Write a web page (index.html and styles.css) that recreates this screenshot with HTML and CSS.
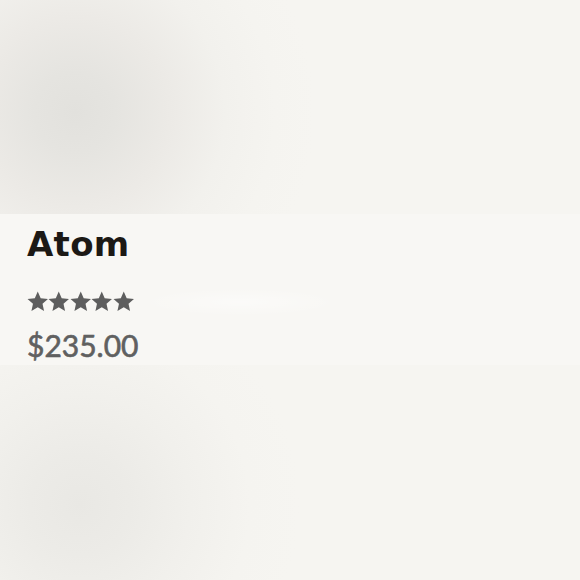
FILE: index.html
```html
<!DOCTYPE html>
<html>
<head>
<meta charset="utf-8">
<link rel="stylesheet" href="styles.css">
</head>
<body>
<div class="page">
  <div class="media media-top"></div>
  <div class="card">
    <h2 class="title">Atom</h2>
    <div class="stars" aria-label="5 stars">
      <svg class="star" viewBox="0 0 24 24"><polygon points="12,0.6 15.29,8.07 23.41,8.89 17.33,14.33 19.05,22.31 12,18.2 4.95,22.31 6.67,14.33 0.59,8.89 8.71,8.07"/></svg>
      <svg class="star" viewBox="0 0 24 24"><polygon points="12,0.6 15.29,8.07 23.41,8.89 17.33,14.33 19.05,22.31 12,18.2 4.95,22.31 6.67,14.33 0.59,8.89 8.71,8.07"/></svg>
      <svg class="star" viewBox="0 0 24 24"><polygon points="12,0.6 15.29,8.07 23.41,8.89 17.33,14.33 19.05,22.31 12,18.2 4.95,22.31 6.67,14.33 0.59,8.89 8.71,8.07"/></svg>
      <svg class="star" viewBox="0 0 24 24"><polygon points="12,0.6 15.29,8.07 23.41,8.89 17.33,14.33 19.05,22.31 12,18.2 4.95,22.31 6.67,14.33 0.59,8.89 8.71,8.07"/></svg>
      <svg class="star" viewBox="0 0 24 24"><polygon points="12,0.6 15.29,8.07 23.41,8.89 17.33,14.33 19.05,22.31 12,18.2 4.95,22.31 6.67,14.33 0.59,8.89 8.71,8.07"/></svg>
    </div>
    <div class="price">$235.00</div>
  </div>
  <div class="media media-bottom"></div>
</div>
</body>
</html>
```
FILE: styles.css
```css
html, body {
  margin: 0;
  padding: 0;
  background: #f6f5f1;
}
.page {
  width: 580px;
  height: 580px;
  display: flex;
  flex-direction: column;
  overflow: hidden;
}
.media {
  flex: none;
}
.media-top {
  height: 214px;
  background:
    radial-gradient(circle at 75px 112px, #e2e1dd 0px, #e5e4e0 40px, #eceae6 95px, #f2f1ed 150px, #f5f4f0 200px, rgba(246,245,241,0) 240px),
    #f6f5f1;
}
.card {
  height: 151px;
  box-sizing: border-box;
  padding: 10px 27px 0;
  background:
    radial-gradient(ellipse 100px 14px at 240px 88px, rgba(255,255,255,0.45), rgba(255,255,255,0) 100%),
    #f8f7f4;
  display: flex;
  flex-direction: column;
}
.title {
  margin: 0;
  font-family: "DejaVu Sans", sans-serif;
  font-weight: bold;
  font-size: 34px;
  line-height: 40px;
  color: #1c1915;
  letter-spacing: 0.3px;
}
.stars {
  display: flex;
  margin-top: 27px;
  margin-left: -0.5px;
  height: 22px;
}
.star {
  width: 21.5px;
  height: 21.5px;
  fill: #5e5e5e;
}
.price {
  margin-top: 14px;
  font-family: Lato, sans-serif;
  font-weight: 400;
  font-size: 30px;
  line-height: 36px;
  color: #606060;
  -webkit-text-stroke: 0.6px #606060;
}
.media-bottom {
  flex: 1;
  background:
    radial-gradient(circle at 80px 140px, #e9e8e4 0px, #ecebe7 50px, #f1f0ec 110px, #f5f4f0 170px, rgba(246,245,241,0) 220px),
    #f6f5f1;
}
```
